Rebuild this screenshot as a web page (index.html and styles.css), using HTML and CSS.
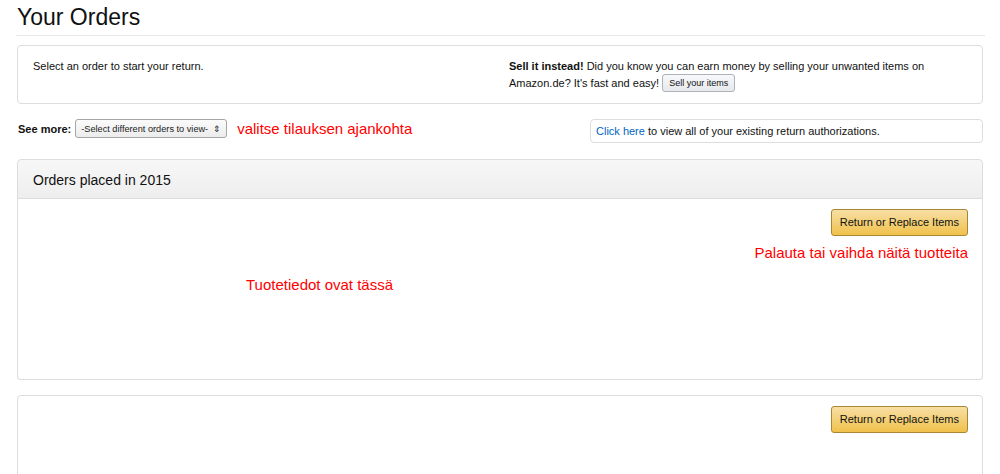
FILE: index.html
```html
<!DOCTYPE html>
<html>
<head>
<meta charset="utf-8">
<link rel="stylesheet" href="styles.css">
</head>
<body>
<div class="page">
  <h1 class="title">Your Orders</h1>
  <div class="box intro">
    <div class="intro-left">Select an order to start your return.</div>
    <div class="intro-right"><b>Sell it instead!</b> Did you know you can earn money by selling your unwanted items on Amazon.de? It's fast and easy! <span class="btn-small">Sell your items</span></div>
  </div>
  <div class="filter-row">
    <div class="see-more">
      <span class="label">See more:</span>
      <span class="select">-Select different orders to view-<span class="arrows">&#8661;</span></span>
      <span class="note note-filter">valitse tilauksen ajankohta</span>
    </div>
    <div class="box auth"><a class="link" href="#">Click here</a> to view all of your existing return authorizations.</div>
  </div>
  <div class="section-head">Orders placed in 2015</div>
  <div class="order first">
    <div class="order-actions">
      <span class="btn-yellow">Return or Replace Items</span>
      <span class="note">Palauta tai vaihda näitä tuotteita</span>
    </div>
    <div class="note product-note">Tuotetiedot ovat tässä</div>
  </div>
  <div class="order second">
    <div class="order-actions">
      <span class="btn-yellow">Return or Replace Items</span>
    </div>
  </div>
</div>
</body>
</html>
```

FILE: styles.css
```css
html, body { margin: 0; padding: 0; background: #fff; }
body { font-family: "Liberation Sans", Arial, sans-serif; color: #111; font-size: 11px; overflow: hidden; height: 474px; }
.page { width: 966px; margin-left: 17px; }
.title {
  font-weight: normal; font-size: 23px; line-height: 26px; margin: 0;
  padding: 4px 0 5px 1px; border-bottom: 1px solid #e7e7e7; margin-left: -1px; width: 968px;
}
.box { border: 1px solid #ddd; border-radius: 4px; background: #fff; }
.intro {
  margin-top: 9px; height: 57px; display: grid; grid-template-columns: 476px 430px;
  padding: 0 15px; line-height: 17px;
}
.intro-left { padding-top: 12px; }
.intro-right { padding-top: 12px; }
.btn-small {
  display: inline-block; font-size: 9px; line-height: 16px; padding: 0 6px;
  border: 1px solid #adb1b8; border-radius: 3px; background: linear-gradient(#f7f8fa, #e7e9ec);
  vertical-align: middle; margin-top: -2px; color: #111;
}
.filter-row { display: flex; justify-content: space-between; align-items: flex-start; margin-top: 15px; height: 39px; }
.see-more { display: flex; align-items: center; }
.label { font-weight: bold; margin-left: 1px; }
.select {
  margin-left: 4px; display: inline-flex; align-items: center; height: 17px; padding: 0 5px;
  border: 1px solid #a6a6a6; border-radius: 3px; background: linear-gradient(#fbfbfb, #ececec);
  font-size: 9.2px; color: #222;
}
.arrows { font-size: 9px; margin-left: 5px; }
.note { color: #f00; font-size: 15px; }
.note-filter { margin-left: 10px; }
.auth { width: 386px; height: 22px; line-height: 22px; padding-left: 5px; }
.link { color: #0066c0; text-decoration: none; }
.section-head {
  border: 1px solid #ddd; border-radius: 4px 4px 0 0; height: 38px; line-height: 40px; margin-top: 1px;
  background: linear-gradient(#f7f7f7, #eeeeee); padding-left: 15px; font-size: 14px;
}
.order { border: 1px solid #ddd; border-top: 0; border-radius: 0 0 4px 4px; }
.order.first { height: 180px; }
.order.second { border-top: 1px solid #ddd; border-radius: 4px; margin-top: 15px; height: 100px; }
.order-actions { display: flex; flex-direction: column; align-items: flex-end; padding: 10px 14px 0 0; gap: 8px; }
.btn-yellow {
  display: inline-block; height: 25px; line-height: 25px; padding: 0 8px; font-size: 11px;
  border: 1px solid #a88734; border-radius: 3px; background: linear-gradient(#f7dfa5, #f0c14b); color: #111;
}
.product-note { margin: 15px 0 0 228px; }
```
